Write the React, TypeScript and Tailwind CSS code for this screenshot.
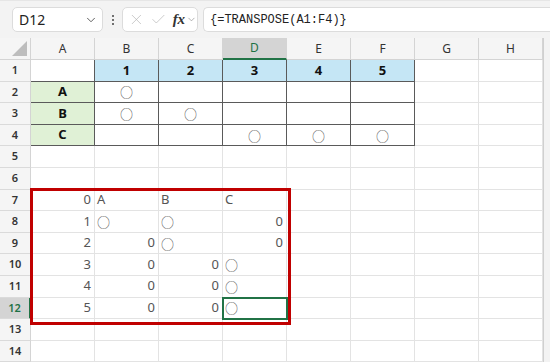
import React from "react";
import { X, Check, ChevronDown } from "lucide-react";

type Cell = { t?: string; align?: "l" | "c" | "r"; bold?: boolean; bg?: string };

const cols = ["A", "B", "C", "D", "E", "F", "G", "H"];
const O = "○";

const data: Record<string, Cell> = {
  B1: { t: "1", align: "c", bold: true, bg: "bg-[#c5e6f5]" },
  C1: { t: "2", align: "c", bold: true, bg: "bg-[#c5e6f5]" },
  D1: { t: "3", align: "c", bold: true, bg: "bg-[#c5e6f5]" },
  E1: { t: "4", align: "c", bold: true, bg: "bg-[#c5e6f5]" },
  F1: { t: "5", align: "c", bold: true, bg: "bg-[#c5e6f5]" },
  A2: { t: "A", align: "c", bold: true, bg: "bg-[#e0f1d6]" },
  A3: { t: "B", align: "c", bold: true, bg: "bg-[#e0f1d6]" },
  A4: { t: "C", align: "c", bold: true, bg: "bg-[#e0f1d6]" },
  B2: { t: O, align: "c" },
  B3: { t: O, align: "c" },
  C3: { t: O, align: "c" },
  D4: { t: O, align: "c" },
  E4: { t: O, align: "c" },
  F4: { t: O, align: "c" },
  A7: { t: "0", align: "r" },
  B7: { t: "A", align: "l" },
  C7: { t: "B", align: "l" },
  D7: { t: "C", align: "l" },
  A8: { t: "1", align: "r" },
  B8: { t: O, align: "l" },
  C8: { t: O, align: "l" },
  D8: { t: "0", align: "r" },
  A9: { t: "2", align: "r" },
  B9: { t: "0", align: "r" },
  C9: { t: O, align: "l" },
  D9: { t: "0", align: "r" },
  A10: { t: "3", align: "r" },
  B10: { t: "0", align: "r" },
  C10: { t: "0", align: "r" },
  D10: { t: O, align: "l" },
  A11: { t: "4", align: "r" },
  B11: { t: "0", align: "r" },
  C11: { t: "0", align: "r" },
  D11: { t: O, align: "l" },
  A12: { t: "5", align: "r" },
  B12: { t: "0", align: "r" },
  C12: { t: "0", align: "r" },
  D12: { t: O, align: "l" },
};

function inTable(ci: number, r: number) {
  if (r === 1) return ci >= 1 && ci <= 5;
  if (r >= 2 && r <= 4) return ci >= 0 && ci <= 5;
  return false;
}

const font = { fontFamily: '"Noto Sans", "Noto Sans CJK JP", sans-serif' };
const cjk = { fontFamily: '"Noto Sans CJK JP", sans-serif' };

export default function App() {
  const rows = Array.from({ length: 14 }, (_, i) => i + 1);
  return (
    <div className="w-[550px] h-[362px] overflow-hidden bg-[#f3f3f3]" style={font}>
      {/* formula bar */}
      <div className="h-[38px] flex items-center bg-[#f3f3f3] border-t border-[#e6e6e6]">
        <div className="ml-[12px] w-[91px] h-[25px] bg-white border border-[#dcdcdc] rounded-[5px] flex items-center pl-[6px] pr-[4px]">
          <span className="text-[14px] text-[#222] flex-1">D12</span>
          <ChevronDown size={14} strokeWidth={1.6} className="text-[#555]" />
        </div>
        <div className="w-[19px] flex flex-col items-center gap-[2px]">
          <span className="w-[2px] h-[2px] bg-[#444] rounded-full" />
          <span className="w-[2px] h-[2px] bg-[#444] rounded-full" />
          <span className="w-[2px] h-[2px] bg-[#444] rounded-full" />
        </div>
        <div className="w-[76px] h-[25px] bg-white border border-[#dcdcdc] rounded-[5px] flex items-center pl-[5px]">
          <X size={17} strokeWidth={1} className="text-[#b4b4b4]" />
          <Check size={17} strokeWidth={1} className="text-[#b4b4b4] ml-[5px]" />
          <span
            className="ml-[6px] text-[15px] italic font-bold text-[#333] leading-none"
            style={{ fontFamily: '"Liberation Serif", serif' }}
          >
            fx
          </span>
          <ChevronDown size={11} strokeWidth={1.4} className="text-[#888] ml-[1px]" />
        </div>
        <div className="ml-[5px] flex-1 h-[25px] bg-white border border-[#dcdcdc] rounded-l-[5px] border-r-0 flex items-center pl-[6px]">
          <span className="text-[12px] text-[#222]" style={{ fontFamily: '"Liberation Mono", monospace' }}>
            {"{=TRANSPOSE(A1:F4)}"}
          </span>
        </div>
      </div>

      {/* sheet */}
      <div className="relative">
        <div className="grid grid-cols-[31px_repeat(8,64px)_7px] grid-rows-[22px_repeat(14,21.6px)] bg-white">
          <div className="bg-[#f5f5f5] border-r border-b border-[#d4d4d4] relative">
            <div
              className="absolute right-[3px] bottom-[3px] w-[15px] h-[15px] bg-[#bdbdbd]"
              style={{ clipPath: "polygon(100% 0, 100% 100%, 0 100%)" }}
            />
          </div>
          {cols.map((c) => {
            const sel = c === "D";
            return (
              <div
                key={c}
                className={
                  "flex items-center justify-center text-[12px] border-r border-[#d4d4d4] " +
                  (sel
                    ? "bg-[#d4d4d4] text-[#1e7145] border-b-2 border-b-[#217346]"
                    : "bg-[#f5f5f5] text-[#333] border-b border-b-[#d4d4d4]")
                }
              >
                {c}
              </div>
            );
          })}
          <div className="bg-[#f3f3f3] border-l border-[#d0d0d0]" />

          {rows.map((r) => (
            <React.Fragment key={r}>
              <div
                className={
                  "flex items-center justify-center text-[11px] font-semibold border-b border-[#dadada] " +
                  (r === 12
                    ? "bg-[#d4d4d4] text-[#1e7145] border-r-2 border-r-[#217346]"
                    : "bg-[#f5f5f5] text-[#333] border-r border-r-[#d4d4d4]")
                }
              >
                {r}
              </div>
              {cols.map((c, ci) => {
                const key = c + r;
                const cell = data[key];
                const t = inTable(ci, r);
                const rightDark = t || inTable(ci + 1, r);
                const bottomDark = t || inTable(ci, r + 1);
                const align =
                  cell?.align === "c" ? "justify-center" : cell?.align === "r" ? "justify-end pr-[3px]" : "justify-start pl-[2px]";
                return (
                  <div
                    key={key}
                    className={
                      "flex items-center overflow-hidden whitespace-nowrap border-r border-b " +
                      align +
                      " " +
                      (rightDark ? "border-r-[#5a5a5a] " : "border-r-[#e3e3e3] ") +
                      (bottomDark ? "border-b-[#5a5a5a] " : "border-b-[#e3e3e3] ") +
                      (cell?.bg ?? "bg-white") +
                      " " +
                      (cell?.bold ? "font-bold text-[13px] text-[#111]" : "text-[13px] text-[#555]")
                    }
                  >
                    {cell?.t &&
                      (cell.t === O ? (
                        <span className="text-[13px] text-[#555] leading-none" style={cjk}>
                          {cell.t}
                        </span>
                      ) : (
                        <span>{cell.t}</span>
                      ))}
                  </div>
                );
              })}
              <div className="bg-[#f3f3f3] border-l border-[#d0d0d0]" />
            </React.Fragment>
          ))}
        </div>

        {/* red highlight box */}
        <div className="absolute left-[30px] top-[150px] w-[261px] h-[137px] border-[3px] border-[#c00000] pointer-events-none" />
        {/* selected cell D12 */}
        <div className="absolute left-[222px] top-[259px] w-[66px] h-[23px] border-2 border-[#217346] pointer-events-none" />
      </div>
    </div>
  );
}
